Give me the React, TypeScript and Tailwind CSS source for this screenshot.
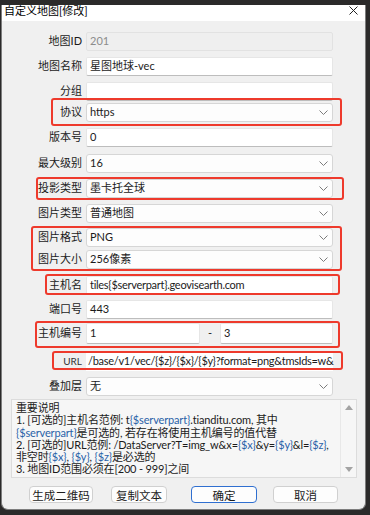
import React from "react";

const font = "font-['Lato','Noto_Sans_CJK_SC',sans-serif]";

type Row = {
  label: string;
  mt: string;
  kind: "text" | "select" | "disabled" | "range" | "plain";
  value?: string;
  value2?: string;
  tight?: boolean;
};

const rows: Row[] = [
  { label: "地图ID", mt: "mt-[11px]", kind: "disabled", value: "201" },
  { label: "地图名称", mt: "mt-[6px]", kind: "text", value: "星图地球-vec" },
  { label: "分组", mt: "mt-[6px]", kind: "text", value: "" },
  { label: "协议", mt: "mt-[2px]", kind: "select", value: "https" },
  { label: "版本号", mt: "mt-[6px]", kind: "text", value: "0" },
  { label: "最大级别", mt: "mt-[7px]", kind: "select", value: "16" },
  { label: "投影类型", mt: "mt-[6px]", kind: "select", value: "墨卡托全球" },
  { label: "图片类型", mt: "mt-[6px]", kind: "select", value: "普通地图" },
  { label: "图片格式", mt: "mt-[5px]", kind: "select", value: "PNG" },
  { label: "图片大小", mt: "mt-[3px]", kind: "select", value: "256像素" },
  { label: "主机名", mt: "mt-[7px]", kind: "text", value: "tiles{$serverpart}.geovisearth.com", tight: true },
  { label: "端口号", mt: "mt-[5px]", kind: "text", value: "443" },
  { label: "主机编号", mt: "mt-[5px]", kind: "range", value: "1", value2: "3" },
  { label: "URL", mt: "mt-[9px]", kind: "plain", value: "/base/v1/vec/{$z}/{$x}/{$y}?format=png&tmsIds=w&", tight: true },
  { label: "叠加层", mt: "mt-[6px]", kind: "select", value: "无" },
];

// red annotation boxes drawn over the form
const marks = [
  "left-[51px] top-[98px] w-[291px] h-[28px]",
  "left-[36px] top-[177px] w-[308px] h-[23px]",
  "left-[31px] top-[226px] w-[311px] h-[45px]",
  "left-[45px] top-[274px] w-[295px] h-[21px]",
  "left-[35px] top-[321px] w-[305px] h-[27px]",
  "left-[52px] top-[351px] w-[291px] h-[19px]",
];

function Chevron() {
  return (
    <svg width="9" height="5" viewBox="0 0 9 5" className="shrink-0">
      <path d="M0.5 0.5 L4.5 4.5 L8.5 0.5" fill="none" stroke="#7c7c7c" strokeWidth="1" />
    </svg>
  );
}

function Field({ row }: { row: Row }) {
  const tight = row.tight ? "tracking-[-0.28px]" : "";
  if (row.kind === "disabled") {
    return (
      <div className="w-[247px] h-[19px] flex items-center pl-[3px] bg-[#efefef] border border-[#e2e2e2] rounded-[2px] text-[#8c8c8c]">
        {row.value}
      </div>
    );
  }
  if (row.kind === "select") {
    return (
      <div className="w-[247px] h-[19px] flex items-center justify-between pl-[3px] pr-[4px] bg-[#fdfdfd] border border-[#d6d6d6] rounded-[3px]">
        <span>{row.value}</span>
        <Chevron />
      </div>
    );
  }
  if (row.kind === "range") {
    return (
      <div className="w-[247px] h-[19px] flex items-center">
        <div className="w-[114px] h-[21px] flex items-center pl-[3px] bg-white border border-[#e6e6e6] border-b-[#bdbdbd] rounded-[2px]">
          {row.value}
        </div>
        <span className="w-[20px] text-center">-</span>
        <div className="w-[113px] h-[21px] flex items-center pl-[3px] bg-white border border-[#e6e6e6] border-b-[#bdbdbd] rounded-[2px]">
          {row.value2}
        </div>
      </div>
    );
  }
  if (row.kind === "plain") {
    return (
      <div className={`w-[247px] h-[19px] flex items-center pl-[2px] bg-white whitespace-nowrap ${tight}`}>
        {row.value}
      </div>
    );
  }
  return (
    <div className={`w-[247px] h-[19px] flex items-center pl-[3px] bg-white border border-[#e6e6e6] border-b-[#bdbdbd] rounded-[2px] whitespace-nowrap ${tight}`}>
      {row.value}
    </div>
  );
}

const B = ({ children }: { children: React.ReactNode }) => (
  <span className="text-[#2a62a8]">{children}</span>
);

export default function App() {
  return (
    <div className={`relative w-[370px] h-[515px] overflow-hidden bg-[#2b2a2a] text-[11px] text-[#1b1b1b] ${font}`}>
      <div className="h-[5px]" />
      <div className="ml-[1px] w-[365px] h-[505px] flex flex-col bg-[#f0f0f0] border-x border-b border-[#7d7d7d] rounded-b-[7px] overflow-hidden">
        <div className="h-[16px] shrink-0 bg-white flex items-start justify-between">
          <span className="ml-[2px] leading-[12px] text-[11px] text-black">自定义地图[修改]</span>
          <svg width="9" height="9" viewBox="0 0 9 9" className="mr-[7px] mt-[1px]">
            <path d="M0.5 0.5 L8.5 8.5 M8.5 0.5 L0.5 8.5" stroke="#222" strokeWidth="1" />
          </svg>
        </div>

        {rows.map((row) => (
          <div key={row.label} className={`flex items-center h-[19px] shrink-0 ${row.mt}`}>
            <div className={`w-[80px] text-right whitespace-nowrap ${row.label === "URL" ? "text-[10px] text-[#333]" : ""}`}>{row.label}</div>
            <div className="ml-[4px]">
              <Field row={row} />
            </div>
          </div>
        ))}

        <div className="mt-[3px] ml-[9px] w-[346px] h-[79px] shrink-0 flex bg-[#f6f6f6] border border-[#dcdcdc]">
          <div className="flex-1 pl-[4px] pt-[2px] leading-[12.3px] tracking-[-0.15px] whitespace-nowrap">
            <div>重要说明</div>
            <div>1. [可选的]主机名范例: t<B>{"{$serverpart}"}</B>.tianditu.com, 其中</div>
            <div><B>{"{$serverpart}"}</B>是可选的, 若存在将使用主机编号的值代替</div>
            <div>2. [可选的]URL范例: /DataServer?T=img_w&amp;x=<B>{"{$x}"}</B>&amp;y=<B>{"{$y}"}</B>&amp;l=<B>{"{$z}"}</B>,</div>
            <div>非空时<B>{"{$x}"}</B>, <B>{"{$y}"}</B>, <B>{"{$z}"}</B>是必选的</div>
            <div>3. 地图ID范围必须在[200 - 999]之间</div>
          </div>
          <div className="w-[16px] flex flex-col items-center justify-between py-[5px] border-l border-[#e8e8e8]">
            <svg width="8" height="5" viewBox="0 0 8 5"><path d="M0 5 L4 0 L8 5 Z" fill="#a3a3a3" /></svg>
            <svg width="8" height="5" viewBox="0 0 8 5"><path d="M0 0 L4 5 L8 0 Z" fill="#a3a3a3" /></svg>
          </div>
        </div>

        <div className="mt-[8px] flex h-[17px] shrink-0 text-[11.5px]">
          <button className="ml-[27px] w-[64px] h-full bg-[#fdfdfd] border border-[#d0d0d0] rounded-[4px]">生成二维码</button>
          <button className="ml-[18px] w-[56px] h-full bg-[#fdfdfd] border border-[#d0d0d0] rounded-[4px]">复制文本</button>
          <button className="ml-[24px] w-[66px] h-full bg-[#fdfdfd] border border-[#2f6fd0] rounded-[4px]">确定</button>
          <button className="ml-[16px] w-[65px] h-full bg-[#fdfdfd] border border-[#d0d0d0] rounded-[4px]">取消</button>
        </div>
      </div>

      {marks.map((m) => (
        <div key={m} className={`absolute border-2 border-[#ee3a2c] rounded-[3px] ${m}`} />
      ))}
    </div>
  );
}
